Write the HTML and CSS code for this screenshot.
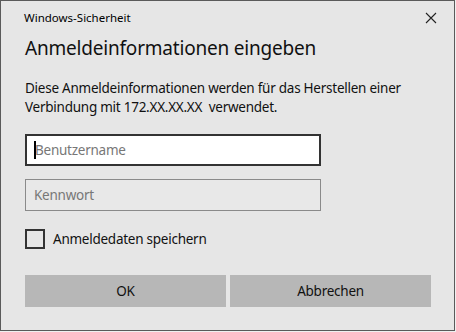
FILE: index.html
```html
<!DOCTYPE html>
<html lang="de">
<head>
  <meta charset="UTF-8" />
  <title>Windows-Sicherheit</title>
  <link rel="stylesheet" href="styles.css">
</head>
<body>

  <div class="dialog">
    <div class="titlebar">
      <span class="title">Windows-Sicherheit</span>
      <svg class="close" width="12" height="12" viewBox="0 0 12 12">
        <path d="M1 1 L11 11 M11 1 L1 11" stroke="#222" stroke-width="1.1" fill="none"/>
      </svg>
    </div>

    <h1>Anmeldeinformationen eingeben</h1>

    <p class="info">Diese Anmeldeinformationen werden für das Herstellen einer Verbindung mit 172.XX.XX.XX&nbsp; verwendet.</p>

    <div class="field active">
      <span class="caret"></span>
      <span class="placeholder">Benutzername</span>
    </div>
    <div class="field">
      <span class="placeholder">Kennwort</span>
    </div>

    <label class="remember">
      <span class="box"></span>
      <span>Anmeldedaten speichern</span>
    </label>

    <div class="buttons">
      <button>OK</button>
      <button>Abbrechen</button>
    </div>
  </div>

</body>
</html>
```

FILE: styles.css
```css
* {
  box-sizing: border-box;
}

body {
  margin: 0;
  background-color: #f0f0f0;
  font-family: 'Noto Sans', sans-serif;
  color: #000;
}

.dialog {
  width: 455px;
  height: 331px;
  border: 1px solid #5a5a5a;
  background-color: #e6e6e6;
  padding: 0 23px 0 24px;
}

.titlebar {
  display: flex;
  justify-content: space-between;
  align-items: center;
  height: 33px;
  margin-right: -6px;
}

.title {
  font-size: 11.5px;
  margin-left: -1px;
}

.close {
  display: block;
}

h1 {
  font-size: 19px;
  letter-spacing: -0.2px;
  font-weight: normal;
  margin: 0;
  line-height: 28px;
  color: #111;
}

.info {
  font-size: 13.5px;
  letter-spacing: -0.25px;
  line-height: 19px;
  margin: 17px 0 0;
  color: #111;
}

.field {
  width: 296px;
  height: 32px;
  border: 1px solid #8a8a8a;
  background-color: #e8e8e8;
  display: flex;
  align-items: center;
  padding-left: 8px;
  margin-top: 13px;
}

.field.active {
  margin-top: 17px;
  border: 2px solid #333;
  background-color: #fff;
  padding-left: 7px;
}

.caret {
  width: 2px;
  height: 18px;
  background-color: #000;
  margin-right: -1px;
}

.placeholder {
  font-size: 13.5px;
  letter-spacing: -0.25px;
  color: #777;
}

.remember {
  display: flex;
  align-items: center;
  gap: 8px;
  margin-top: 18px;
  font-size: 13.5px;
  letter-spacing: -0.25px;
  color: #111;
}

.box {
  width: 20px;
  height: 20px;
  border: 2px solid #333;
}

.buttons {
  display: flex;
  gap: 4px;
  margin-top: 26px;
}

.buttons button {
  width: 201px;
  height: 32px;
  border: none;
  background-color: #b7b7b7;
  font-family: 'Noto Sans', sans-serif;
  font-size: 13.5px;
  letter-spacing: -0.25px;
  color: #111;
}
```
